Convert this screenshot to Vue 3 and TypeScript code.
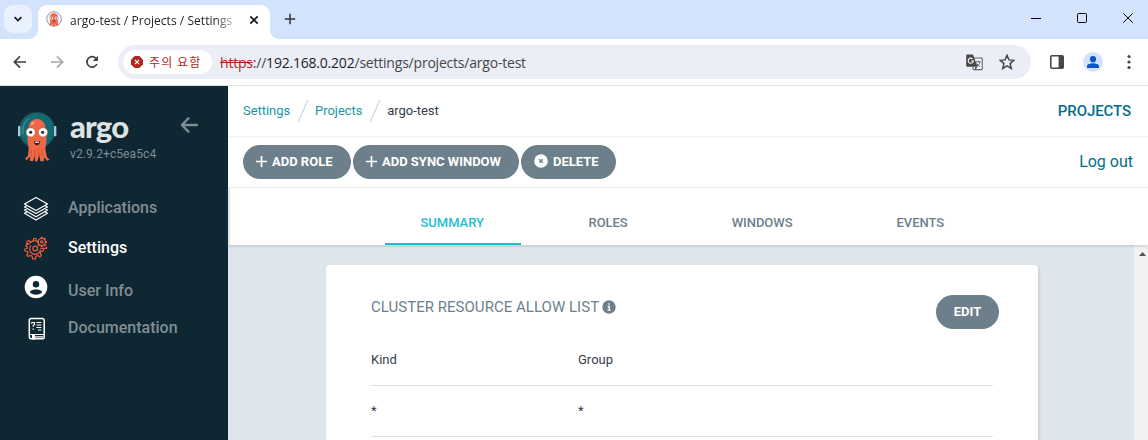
<script setup lang="ts">
interface NavItem {
  label: string
  icon: 'layers' | 'gears' | 'user' | 'book'
  active?: boolean
}

const navItems: NavItem[] = [
  { label: 'Applications', icon: 'layers' },
  { label: 'Settings', icon: 'gears', active: true },
  { label: 'User Info', icon: 'user' },
  { label: 'Documentation', icon: 'book' },
]

const tabs: string[] = ['SUMMARY', 'ROLES', 'WINDOWS', 'EVENTS']

const rows: { kind: string; group: string }[] = [{ kind: '*', group: '*' }]

const toothAngles: number[] = [0, 45, 90, 135, 180, 225, 270]
</script>

<template>
  <div class="window">
    <header class="tabstrip">
      <button class="tab-search" aria-label="Search tabs">
        <svg width="28" height="28" viewBox="0 0 28 28"><path d="M10.6 12.2l3.4 3.4 3.4-3.4" fill="none" stroke="#1f1f1f" stroke-width="1.8" /></svg>
      </button>
      <div class="browser-tab">
        <svg class="favicon" width="16" height="16" viewBox="0 0 16 16">
          <circle cx="8" cy="8" r="7.3" fill="#f4f3f8" stroke="#8d8bbd" stroke-width=".9" />
          <path d="M3.6 7.2C3.6 0.6 12.4 .6 12.4 7.2l-.8 3 .8 3.800-2 .8-.9-2-.3 2.200H6.800l-.4-2.200-.9 2-2.100-1 1-3.600z" fill="#ef6443" />
          <circle cx="5.7" cy="7" r="1.6" fill="#fff" /><circle cx="10.3" cy="7" r="1.6" fill="#fff" />
          <circle cx="5.8" cy="7" r=".7" fill="#333" /><circle cx="10.200" cy="7" r=".7" fill="#333" />
          <path d="M6.8 10h2.4" stroke="#5a2a28" stroke-width=".9" />
        </svg>
        <span class="tab-title">argo-test / Projects / Settings</span>
        <svg class="tab-close" width="10" height="10" viewBox="0 0 10 10"><path d="M1.3 1.3l7.4 7.4M8.7 1.3L1.3 8.7" stroke="#1f1f1f" stroke-width="1.8" /></svg>
      </div>
      <svg class="new-tab" width="12" height="12" viewBox="0 0 12 12"><path d="M6 .8v10.4M.8 6h10.4" stroke="#333" stroke-width="1.5" /></svg>
      <div class="window-controls">
        <svg width="10" height="11" viewBox="0 0 10 11"><path d="M0 6.500h10" stroke="#000" /></svg>
        <svg width="10" height="11" viewBox="0 0 10 11"><rect x=".5" y="1.500" width="9" height="9" rx="1" fill="none" stroke="#000" /></svg>
        <svg width="10" height="11" viewBox="0 0 10 11"><path d="M.3 1.300l9.400 9.400M9.700 1.300L.3 10.700" stroke="#000" /></svg>
      </div>
    </header>

    <div class="toolbar">
      <svg class="tb-back" width="14" height="14" viewBox="0 0 14 14"><path d="M13 7H1.6M7 1.4L1.4 7 7 12.6" fill="none" stroke="#3c4043" stroke-width="1.7" /></svg>
      <svg class="tb-forward" width="14" height="14" viewBox="0 0 14 14"><path d="M1 7h11.4M7 1.4L12.6 7 7 12.6" fill="none" stroke="#a6a8aa" stroke-width="1.7" /></svg>
      <svg class="tb-reload" width="14" height="14" viewBox="0 0 14 14"><path d="M11.9 9A5.2 5.2 0 1 1 10.8 3.2L12.4 4.8" fill="none" stroke="#3c4043" stroke-width="1.7" /><path d="M12.9.8v5.1H7.8z" fill="#3c4043" /></svg>
      <div class="omnibox">
        <div class="chip">
          <svg width="12" height="12" viewBox="0 0 12 12"><path d="M3.7 0h4.6L12 3.7v4.6L8.3 12H3.7L0 8.3V3.7z" fill="#b3261e" /><path d="M3.9 3.9l4.2 4.2M8.1 3.9L3.9 8.1" stroke="#fff" stroke-width="1.3" /></svg>
          <span>주의 요함</span>
        </div>
        <div class="url"><span class="scheme">https</span><span class="sep">://</span><span class="host">192.168.0.202</span><span class="path">/settings/projects/argo-test</span></div>
        <svg class="translate" width="17" height="17" viewBox="0 0 17 17">
          <rect x="7" y="4" width="9.2" height="11.6" rx=".8" fill="#f7f8fc" stroke="#5f6368" stroke-width="1.1" />
          <path d="M1.2.5H7l4.600 12.200H1.200a1 1 0 0 1-1-1V1.500a1 1 0 0 1 1-1z" fill="#474747" />
          <path d="M6.600 4.800A2.600 2.600 0 1 0 7.400 7H5.100" fill="none" stroke="#fff" stroke-width="1.1" />
          <path d="M9.600 7.800h5.200M12.100 6.500v1.300M14 8c-.5 2-1.700 3.500-3.200 4.600M10.500 9.300c.8 1.500 2 2.500 3.600 3.400" fill="none" stroke="#5f6368" />
          <path d="M9 12.700h2.600l-2.400 3z" fill="#474747" />
        </svg>
        <svg class="star" width="16" height="16" viewBox="0 0 16 16"><path d="M8 1.300l1.900 4.600 5 .4-3.800 3.300 1.200 4.900L8 11.900l-4.300 2.600 1.200-4.900L1.100 6.300l5-.4z" fill="none" stroke="#474747" stroke-width="1.500" /></svg>
      </div>
      <svg class="side-panel" width="14" height="14" viewBox="0 0 14 14"><rect x=".8" y=".8" width="12.400" height="12.400" rx="1" fill="#fff" stroke="#474747" stroke-width="1.600" /><path d="M8.600 1h4.400v12H8.600z" fill="#474747" /></svg>
      <svg class="avatar" width="20" height="20" viewBox="0 0 20 20"><circle cx="10" cy="10" r="10" fill="#d3e3fd" /><circle cx="10" cy="7.200" r="3.100" fill="#0b57d0" /><path d="M4 16v-1.800c0-2 3.500-2.900 6-2.900s6 .9 6 2.900V16z" fill="#0b57d0" /></svg>
      <svg class="kebab" width="4" height="16" viewBox="0 0 4 16" fill="#474747"><circle cx="2" cy="2.500" r="1.600" /><circle cx="2" cy="8" r="1.600" /><circle cx="2" cy="13.500" r="1.600" /></svg>
    </div>

    <div class="app">
      <aside class="sidebar">
        <div class="brand">
          <svg class="mascot" width="40" height="54" viewBox="51 72 120 162">
            <circle cx="111" cy="133" r="52" fill="#126b74" stroke="#1d5b66" stroke-width="5" />
            <rect x="54" y="120" width="7" height="31" rx="2" fill="#a9cbd9" /><rect x="162" y="120" width="7" height="31" rx="2" fill="#a9cbd9" />
            <path d="M69 145C67 121 73 107 86 98" fill="none" stroke="#5c9ba0" stroke-width="3" />
            <path d="M86 188L82 160L86 124C88 91 133 91 136 124L140 160L136 188L141 214L149 221L141 224L132 214L131 226L121 226L118 208L112 226L105 226L104 208L99 226L89 224L91 211L80 223L75 218L84 209Z" fill="#ee6845" />
            <path d="M93 191v17M104 190v24M115 190v24M126 190v19" stroke="#c94a32" stroke-width="2" />
            <ellipse cx="98" cy="112" rx="7" ry="4" fill="#fa967c" transform="rotate(-42 98 112)" />
            <circle cx="92" cy="139" r="14" fill="#fff" stroke="#bd5642" stroke-width="2" /><circle cx="129" cy="139" r="14" fill="#fff" stroke="#bd5642" stroke-width="2" />
            <circle cx="92" cy="139" r="4.500" fill="#14242c" /><circle cx="128" cy="139" r="4.500" fill="#14242c" />
            <path d="M101 166q10 4 20-1-3 13-10 13t-10-12z" fill="#231a22" /><path d="M105 168q6 2 12-1v4h-12z" fill="#fff" />
          </svg>
          <div class="brand-text">
            <span class="wordmark">argo</span>
            <span class="version">v2.9.2+c5ea5c4</span>
          </div>
          <svg class="collapse" width="18" height="16" viewBox="0 0 18 16"><path d="M17 8H2M8.400 1.400L1.800 8l6.600 6.600" fill="none" stroke="#818d94" stroke-width="2.300" stroke-linecap="round" stroke-linejoin="round" /></svg>
        </div>

        <nav class="nav">
          <a v-for="item in navItems" :key="item.icon" class="nav-item" :class="[item.icon, { active: item.active }]">
            <span class="nav-icon">
              <svg v-if="item.icon === 'layers'" width="26" height="26" viewBox="0 0 26 26" fill="none" stroke="#fff" stroke-width="1.200" stroke-linejoin="round">
                <path d="M13 2.600L24.500 9 13 15.500 1.500 9z" />
                <path d="M3.800 10.700L1.500 12 13 18.500 24.500 12l-2.300-1.300M3.800 13.700L1.500 15 13 21.700 24.500 15l-2.300-1.300M3.800 16.900l-2.300 1.300L13 25l11.500-6.800-2.300-1.300" />
              </svg>
              <svg v-else-if="item.icon === 'gears'" width="24" height="24" viewBox="0 0 24 24" fill="none" stroke="#ee5c3c" stroke-width="1.200">
                <path d="M14.500 5.600A8 8 0 0 0 4.700 8.200L3 7.600 1.800 10l1.500 1-.1 1.500L.9 13v2l2.500.5.7 1.800-1.300 1.900L4.300 20.600l1.900-1.200 1.900.9.600 2.600h2.700l.5-2.500 1.900-.9 2.200 1.400 1.500-1.600-1.400-2 .9-1.900 2.500-.6v-1.500" stroke-linejoin="round" />
                <path d="M3.500 9L2.600 6.100 4.500 4.400 7 5.900l2-.8.6-2.600h2.300l.3 2.400" />
                <circle cx="11.200" cy="12.500" r="2.400" /><path d="M7 9.300a5.400 5.400 0 1 0 9.400 4" />
                <circle cx="17.800" cy="6" r="3.600" /><circle cx="17.800" cy="6" r="1.200" />
                <path v-for="a in toothAngles" :key="a" d="M17.800 2.400V.8" stroke-width="2" :transform="`rotate(${a} 17.800 6)`" />
                <path d="M16.500 12.400h6v-1.800" />
              </svg>
              <svg v-else-if="item.icon === 'user'" width="24" height="24" viewBox="0 0 24 24"><circle cx="12" cy="12" r="11.300" fill="#fff" /><circle cx="12" cy="9.200" r="3.200" fill="#0f2733" /><path d="M5.700 17c1.400-2 3.600-2.500 6.300-2.500s4.900.5 6.300 2.500c-1.500 1.700-3.700 2.700-6.300 2.700S7.200 18.700 5.700 17z" fill="#0f2733" /></svg>
              <svg v-else width="18" height="24" viewBox="0 0 18 24">
                <path d="M3.200 1.500h11a2 2 0 0 1 2 2v16.800a1.500 1.500 0 0 1-1.500 1.500H3.300a2 2 0 0 1-2-2V3.500a2 2 0 0 1 1.900-2z" fill="none" stroke="#fff" stroke-width="1.500" />
                <path d="M1.500 17.500h14.700M7 19.800h8" stroke="#fff" stroke-width="1.200" /><path d="M4 17.500h3v5.500l-1.500-1.100L4 23z" fill="#fff" />
                <path d="M3.800 6.800V5.500h2.700v2L5.200 8.600v1.200M5.200 11.400v1.300M8.400 5.500h5M8.400 8h5M8.400 10.500h5M10 13h3.400" fill="none" stroke="#fff" stroke-width="1.200" />
              </svg>
            </span>
            <span class="nav-label">{{ item.label }}</span>
          </a>
        </nav>
      </aside>

      <main class="main">
        <div class="crumb-bar">
          <div class="crumbs">
            <a>Settings</a>
            <svg width="12" height="24" viewBox="0 0 12 24"><path d="M11 1L1 23" stroke="#ccd6dd" stroke-width="1.200" /></svg>
            <a>Projects</a>
            <svg width="12" height="24" viewBox="0 0 12 24"><path d="M11 1L1 23" stroke="#ccd6dd" stroke-width="1.200" /></svg>
            <span class="current">argo-test</span>
          </div>
          <span class="page-title">PROJECTS</span>
        </div>

        <div class="action-bar">
          <div class="actions">
            <button class="btn add-role"><svg width="11" height="11" viewBox="0 0 11 11"><path d="M5.500 0v11M0 5.500h11" stroke="#fff" stroke-width="1.700" /></svg><span>ADD ROLE</span></button>
            <button class="btn add-window"><svg width="11" height="11" viewBox="0 0 11 11"><path d="M5.500 0v11M0 5.500h11" stroke="#fff" stroke-width="1.700" /></svg><span>ADD SYNC WINDOW</span></button>
            <button class="btn delete"><svg width="14" height="14" viewBox="0 0 14 14"><circle cx="7" cy="7" r="6.800" fill="#fff" /><path d="M5.200 5.200l3.600 3.600M8.800 5.200L5.200 8.800" stroke="#6d7f8b" stroke-width="1.300" /></svg><span>DELETE</span></button>
          </div>
          <a class="logout">Log out</a>
        </div>

        <div class="tabs">
          <a v-for="(tab, i) in tabs" :key="tab" class="tab" :class="{ selected: i === 0 }">{{ tab }}</a>
        </div>

        <div class="content">
          <div class="scroll-area">
            <section class="card">
              <div class="card-head">
                <h2>CLUSTER RESOURCE ALLOW LIST</h2>
                <svg class="info" width="14" height="14" viewBox="0 0 14 14"><circle cx="7" cy="7" r="6.700" fill="#6d7f8b" /><path d="M7 3.200v1.600M5.700 6.500h1.500v3.500M5.400 10.100h3.300" fill="none" stroke="#fff" stroke-width="1.300" /></svg>
                <button class="btn edit">EDIT</button>
              </div>
              <div class="grid-row"><span>Kind</span><span>Group</span></div>
              <div v-for="(row, i) in rows" :key="i" class="grid-row"><span>{{ row.kind }}</span><span>{{ row.group }}</span></div>
            </section>
          </div>
          <div class="scrollbar"><svg width="7" height="4" viewBox="0 0 7 4"><path d="M0 4L3.500 0 7 4z" fill="#505050" /></svg></div>
        </div>
      </main>
    </div>
  </div>
</template>

<style>
body { margin: 0; overflow: hidden; }
</style>

<style scoped>
* { box-sizing: border-box; }
svg { display: block; flex: none; }
button { border: 0; padding: 0; font: inherit; }
.window { width: 1148px; height: 440px; overflow: hidden; display: flex; flex-direction: column; background: #fff; font-family: Roboto, "Liberation Sans", sans-serif; white-space: nowrap; }

.tabstrip { height: 39px; flex: none; display: flex; align-items: flex-start; background: #d3e3fd; padding-left: 4px; }
.tab-search { width: 28px; height: 28px; margin-top: 5px; border-radius: 9px; background: #e9f1fe; }
.browser-tab { position: relative; width: 232px; height: 34px; margin: 5px 0 0 6px; padding: 0 11px 5px 8px; border-radius: 9px 9px 0 0; background: #fff; display: flex; align-items: center; }
.browser-tab::before, .browser-tab::after { content: ""; position: absolute; bottom: 0; width: 9px; height: 9px; }
.browser-tab::before { left: -9px; background: radial-gradient(circle at 0 0, transparent 8.600px, #fff 9.200px); }
.browser-tab::after { right: -9px; background: radial-gradient(circle at 100% 0, transparent 8.600px, #fff 9.200px); }
.favicon { margin-top: -1px; }
.tab-title { width: 164px; margin: 2px 0 0 8px; overflow: hidden; font: 12px/20px "Open Sans", "Noto Sans", sans-serif; letter-spacing: .05px; color: #1f1f1f; -webkit-mask-image: linear-gradient(90deg, #000 88%, rgba(0, 0, 0, .25)); mask-image: linear-gradient(90deg, #000 88%, rgba(0, 0, 0, .25)); }
.tab-close { margin-left: auto; }
.new-tab { margin: 13px 0 0 14px; }
.window-controls { display: flex; gap: 36px; margin: 12px 15px 0 auto; }

.toolbar { height: 47px; flex: none; display: flex; align-items: center; border-bottom: 1px solid #dfe1e5; padding: 0 17px 0 13px; }
.tb-forward { margin-left: 23px; }
.tb-reload { margin-left: 21px; }
.omnibox { width: 913px; height: 34px; margin-left: 19px; border-radius: 17px; background: #ebeef7; display: flex; align-items: center; padding: 0 16px 0 5px; }
.chip { width: 89px; height: 24px; border-radius: 12px; background: #fff; display: flex; align-items: center; padding-left: 8px; }
.chip span { margin: -1px 0 0 6px; font: 12px/20px "Noto Sans CJK KR", sans-serif; color: #b3261e; letter-spacing: 1.100px; }
.url { margin: 1px 0 0 8px; font: 14px/20px "Open Sans", "Noto Sans", sans-serif; color: #474747; letter-spacing: -.21px; }
.scheme { color: #b3261e; text-decoration: line-through; }
.host { color: #1f1f1f; }
.translate { margin-left: auto; }
.star { margin-left: 16px; }
.side-panel { margin-left: 19px; }
.avatar { margin-left: 19px; }
.kebab { margin-left: 24px; }

.app { flex: 1; min-height: 0; display: flex; }
.sidebar { width: 228px; flex: none; background: #0f2733; }
.brand { height: 102px; display: flex; align-items: flex-start; padding: 24px 0 0 17px; }
.brand-text { display: flex; flex-direction: column; margin-left: 13px; width: 96px; }
.wordmark { height: 38px; margin-top: -1px; font: 900 31px/34px Lato, sans-serif; color: #dee2e2; letter-spacing: -.8px; }
.version { font-size: 12px; line-height: 14px; color: #818d94; letter-spacing: .1px; }
.collapse { margin: 7px 0 0 14px; }
.nav { padding: 0 0 0 21px; }
.nav-item { display: flex; align-items: center; height: 40px; color: #818d94; font-size: 16px; font-weight: 500; }
.nav-item.active { color: #fff; }
.nav-item.user .nav-icon { margin-top: -2px; }
.nav-item.user .nav-label { margin-top: 6px; }
.nav-item.book .nav-icon { padding-left: 1px; margin-top: 1px; }
.nav-icon { width: 30px; display: flex; justify-content: center; }
.nav-label { margin-left: 17px; line-height: 20px; }

.main { flex: 1; min-width: 0; display: flex; flex-direction: column; background: #fff; }
.crumb-bar { height: 51px; flex: none; display: flex; align-items: center; justify-content: space-between; border-bottom: 1px solid #eff0f1; padding: 0 17px 0 15px; }
.crumbs { display: flex; align-items: center; font-size: 13px; letter-spacing: -.05px; color: #1899a8; }
.crumbs a, .current { margin-top: -1px; }
.crumbs a + svg { margin: 0 6px 0 7px; }
.current { color: #363c4a; }
.page-title { color: #006f8a; font-size: 15px; font-weight: 500; letter-spacing: -.08px; }
.action-bar { height: 51px; flex: none; display: flex; align-items: center; justify-content: space-between; border-bottom: 1px solid #eff0f1; padding: 0 15px; }
.actions { display: flex; gap: 2px; }
.btn { height: 34px; border-radius: 17px; background: #6d7f8b; color: #fff; font-size: 13px; font-weight: 700; display: flex; align-items: center; padding: 0 0 2px 13px; }
.btn svg + span { margin-left: 5px; }
.add-role { width: 108px; }
.add-window { width: 166px; }
.delete { width: 95px; }
.delete span { margin-left: 4px; }
.logout { color: #006f8a; font-size: 16px; margin-top: -2px; }
.tabs { height: 57px; flex: none; display: flex; gap: 32px; padding-left: 155px; border-left: 2px solid #dee6eb; position: relative; z-index: 1; box-shadow: 0 1px 3px rgba(80, 110, 125, .28); background: #fff; }
.tab { padding: 0 36px; line-height: 69px; font-size: 13px; font-weight: 500; color: #6d7f8b; border-bottom: 2px solid transparent; overflow: hidden; letter-spacing: -.04px; }
.tab.selected { width: 136px; padding-left: 35.500px; color: #1fbdd0; border-color: #1fbdd0; }
.tab.selected + .tab { margin-left: -.5px; }
.content { flex: 1; min-height: 0; display: flex; background: #dee6eb; }
.scroll-area { flex: 1; padding: 20px 96px 0 98px; overflow: hidden; }
.card { height: 220px; padding: 30px 45px 0; background: #fff; border-radius: 4px; box-shadow: 1px 2px 3px rgba(80, 110, 125, .22); }
.card-head { height: 40px; display: flex; align-items: flex-start; margin-right: -6px; }
.card-head h2 { margin: 2px 0 0; font-size: 15px; line-height: 20px; font-weight: 400; color: #6d7f8b; letter-spacing: .03px; }
.info { margin: 5px 0 0 3px; }
.edit { width: 63px; margin-left: auto; justify-content: center; padding: 0 0 2px; }
.grid-row { height: 51px; border-bottom: 1px solid #dee2e6; display: grid; grid-template-columns: 207px 1fr; font-size: 13px; line-height: 49px; color: #363c4a; }
.scrollbar { width: 14px; background: #f1f1f1; padding: 7px 0 0 5px; }
</style>
